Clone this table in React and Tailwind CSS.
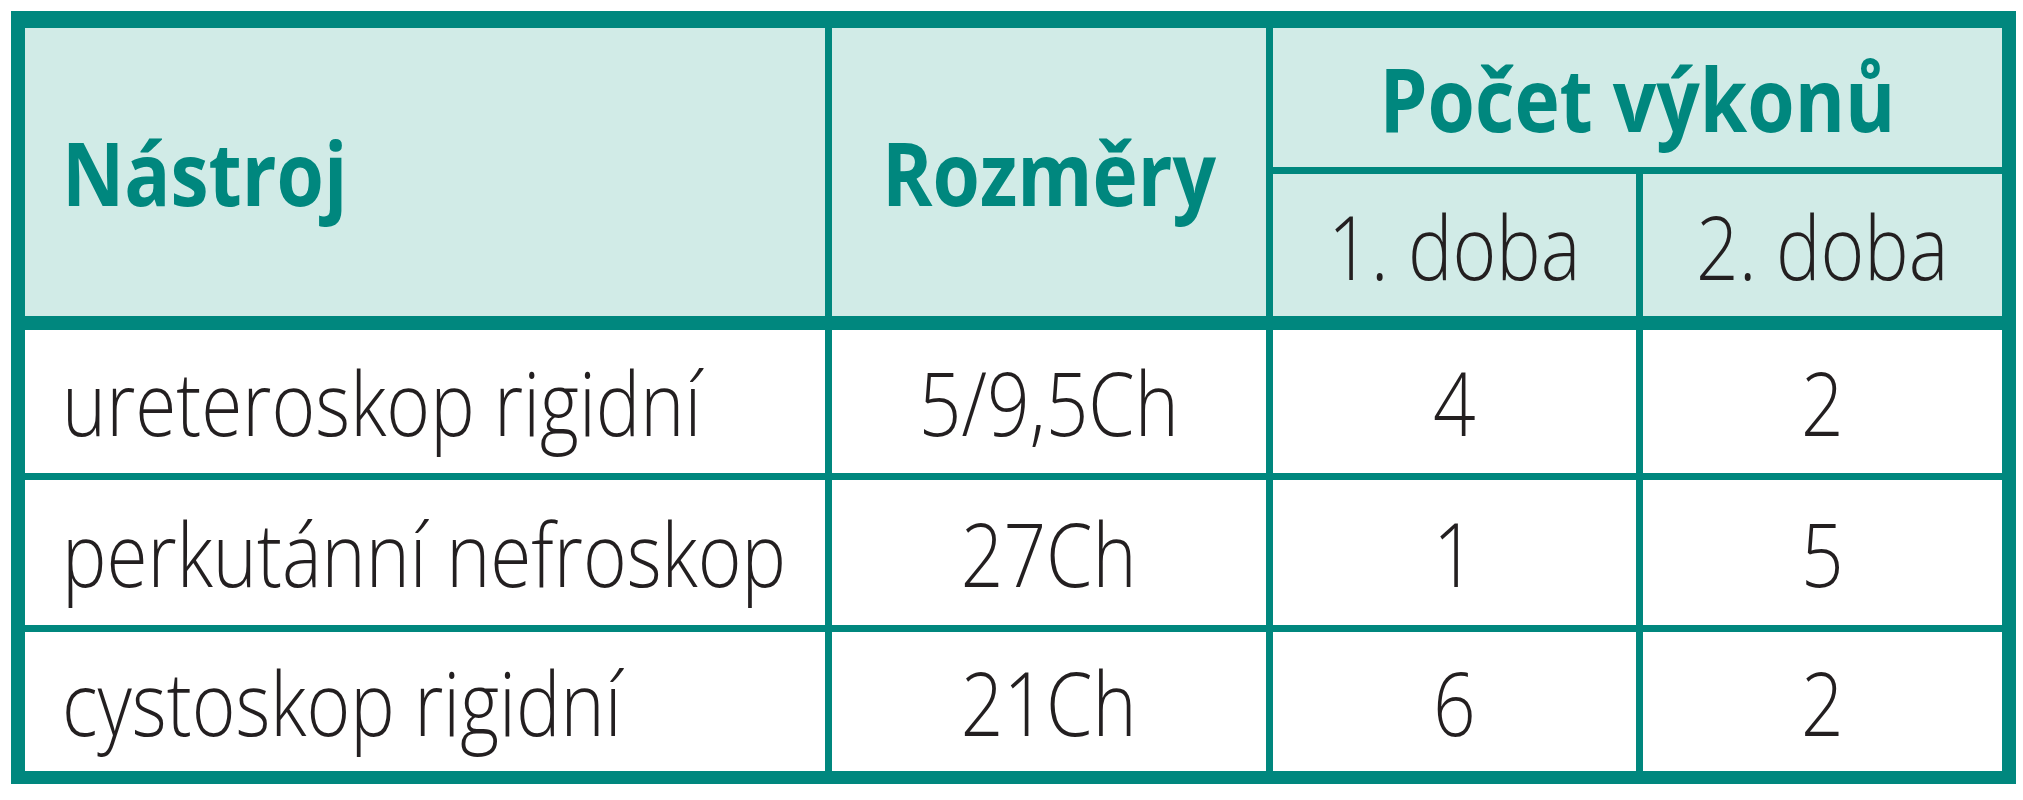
function T({ children, head, left }) {
  const cls = head
    ? "inline-block whitespace-nowrap text-[#00877e] font-bold text-[88px] leading-none scale-x-[0.87]"
    : "inline-block whitespace-nowrap text-[#231f20] font-light text-[89px] leading-none scale-x-[0.84]";
  return <span className={`${cls} ${left ? "origin-left" : "origin-center"}`}>{children}</span>;
}

export default function App() {
  const rows = [
    ["ureteroskop rigidní", "5/9,5Ch", "4", "2", "h-[143px]"],
    ["perkutánní nefroskop", "27Ch", "1", "5", "h-[145px]"],
    ["cystoskop rigidní", "21Ch", "6", "2", "h-[139px]"],
  ];
  const hcell = "bg-[#d1ebe7] flex items-center";
  const bcell = "bg-white flex items-center";
  return (
    <div className="w-[2023px] h-[800px] bg-white pl-[11px] pt-[11px]" style={{ fontFamily: '"Open Sans", "Noto Sans", sans-serif' }}>
      <div className="w-[2005px] bg-[#00877e] pt-[17px] pb-[13px] px-[14px] flex flex-col">
        <div className="flex gap-[7px] h-[288px]">
          <div className={`w-[800px] pl-[37px] ${hcell}`}><T head left>Nástroj</T></div>
          <div className={`w-[434px] justify-center ${hcell}`}><T head>Rozměry</T></div>
          <div className="w-[729px] flex flex-col gap-[7px]">
            <div className={`h-[139px] justify-center ${hcell}`}><T head>Počet výkonů</T></div>
            <div className="flex-1 flex gap-[7px]">
              <div className={`w-[363px] justify-center ${hcell}`}><T>1. doba</T></div>
              <div className={`w-[359px] justify-center ${hcell}`}><T>2. doba</T></div>
            </div>
          </div>
        </div>
        <div className="mt-[14px] flex flex-col gap-[7px]">
          {rows.map((r, i) => (
            <div key={i} className={`flex gap-[7px] ${r[4]}`}>
              <div className={`w-[800px] pl-[37px] ${bcell}`}><T left>{r[0]}</T></div>
              <div className={`w-[434px] justify-center ${bcell}`}><T>{r[1]}</T></div>
              <div className={`w-[363px] justify-center ${bcell}`}><T>{r[2]}</T></div>
              <div className={`w-[359px] justify-center ${bcell}`}><T>{r[3]}</T></div>
            </div>
          ))}
        </div>
      </div>
    </div>
  );
}
